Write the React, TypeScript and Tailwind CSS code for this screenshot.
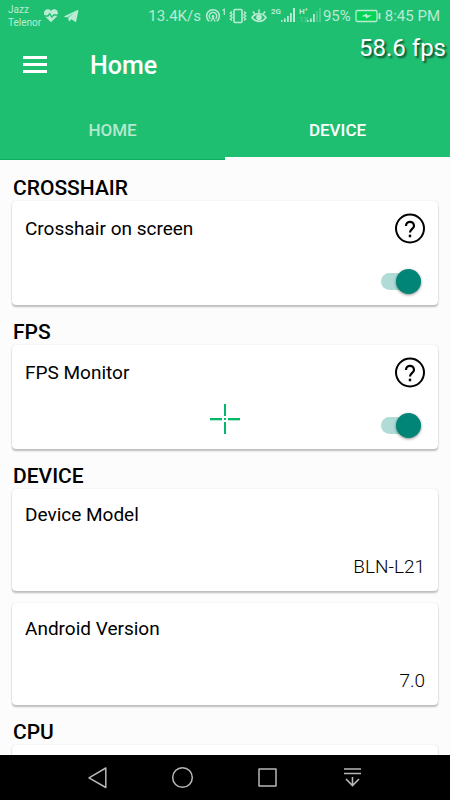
import type { ReactNode } from "react";

function StatusBar() {
  return (
    <div className="flex h-8 items-center pl-2 pr-2.5 text-[#b9ecd2]">
      <div className="text-[10px] leading-[13px]">
        <p>Jazz</p>
        <p>Telenor</p>
      </div>
      <svg className="ml-0.5 h-4 w-4" viewBox="0 0 16 16" aria-hidden="true">
        <path
          fill="currentColor"
          d="M8 14.3 2.4 8.8C.2 6.4.6 2.600 3.4 1.500 5.2.8 7 1.500 8 3c1-1.500 2.800-2.200 4.600-1.500 2.800 1.100 3.200 4.900 1 7.300z"
        />
        <path d="M1 8h4l1.800-2.400 2 3.600L10.600 7H15" fill="none" stroke="#1fbf72" strokeWidth="1.3" />
      </svg>
      <svg className="ml-1 h-4 w-4" viewBox="0 0 16 16" aria-hidden="true">
        <path fill="currentColor" d="M.8 8.400 14.600 2c.5-.2.9.1.8.7l-2.200 10.600c-.1.7-.6.9-1.200.5L8.500 11.200 6.700 13c-.5.5-.9.3-1-.3l-.5-3.100 6-4.600L4 9.400z" />
      </svg>

      <div className="ml-auto flex items-center text-[15px]">
        <span>13.4K/s</span>
        <svg className="ml-1 h-4 w-[22px]" viewBox="0 0 22 16" fill="none" stroke="currentColor" aria-hidden="true">
          <path d="M4.200 13.200a6.400 6.400 0 1 1 7.600 0M5.300 10.700a3.700 3.700 0 1 1 5.400 0" strokeWidth="1.500" />
          <circle cx="8" cy="8.300" r="1.300" fill="currentColor" stroke="none" />
          <path d="m5.800 13.500 2.200-4 2.200 4" strokeWidth="1.300" />
          <path d="m17.500 2.500 1.800-1.200v5.700" strokeWidth="1.200" />
        </svg>
        <svg className="ml-0.5 h-4 w-[18px]" viewBox="0 0 18 16" fill="none" stroke="currentColor" aria-hidden="true">
          <rect x="5" y="1.500" width="8" height="13" rx="1" strokeWidth="1.600" />
          <path d="M3 3.500 1.300 5 3 6.500 1.300 8 3 9.500 1.300 11 3 12.500M15 3.500 16.700 5 15 6.500 16.700 8 15 9.500 16.700 11 15 12.500" strokeWidth="1.400" />
        </svg>
        <svg className="ml-1 h-4 w-4" viewBox="0 0 16 16" fill="none" stroke="currentColor" aria-hidden="true">
          <path d="M1 9.500c3.500-5 10.500-5 14 0-3.500 5.200-10.500 5.200-14 0z" strokeWidth="1.700" />
          <circle cx="8" cy="9.400" r="2.800" fill="currentColor" stroke="none" />
          <path d="M8 5.500V1.500M3.800 5.800 1.800 3.400M12.200 5.800l2-2.400" strokeWidth="1.500" />
        </svg>
        <span className="ml-1 w-2.5 pb-2 text-[8px] leading-2 font-bold">2G</span>
        <svg className="h-4 w-3.5" viewBox="0 0 14 16" fill="currentColor" aria-hidden="true">
          <path d="M0 12h1.500v2H0zM3 10.500h1.700V14H3zM6 8h1.800v6H6zM9 5h1.800v9H9zM12 0h2v14h-2z" />
        </svg>
        <span className="ml-1 flex w-2 flex-col text-[8px] leading-2 font-bold">
          <span>H⁺</span>
          <span className="opacity-25">1X</span>
        </span>
        <svg className="h-4 w-3.5" viewBox="0 0 14 16" fill="currentColor" aria-hidden="true">
          <path d="M0 12h1.500v2H0zM3 10.500h1.700V14H3zM6 6h1.800v8H6z" />
          <path d="M9 3h1.800v11H9zM12 0h2v14h-2z" opacity=".3" />
        </svg>
        <span className="ml-0.5">95%</span>
        <svg className="ml-1 h-4 w-[26px]" viewBox="0 0 26 16" aria-hidden="true">
          <rect x="1" y="2.500" width="21" height="11" rx="1.500" fill="#00d457" stroke="currentColor" strokeWidth="1.300" />
          <path d="M24.500 5v6" stroke="currentColor" strokeWidth="1.800" />
          <path d="m6.500 8.200 5.500-2.700v1.700h5l-6 3.300V8.800z" fill="currentColor" />
        </svg>
        <span className="ml-1">8:45 PM</span>
      </div>
    </div>
  );
}

function Header() {
  return (
    <header className="bg-[#1fbf72]">
      <StatusBar />
      <div className="flex h-[68px] items-center px-[23px]">
        <button type="button" aria-label="Open menu" className="flex w-6 flex-col gap-1 pb-[3px]">
          <span className="h-[3px] w-full bg-white" />
          <span className="h-[3px] w-full bg-white" />
          <span className="h-[3px] w-full bg-white" />
        </button>
        <h1 className="ml-[43px] text-[25px] font-medium text-white">Home</h1>
      </div>
      <div role="tablist" className="grid h-[60px] grid-cols-2 text-[17px] font-medium">
        <button type="button" role="tab" aria-selected="false" className="border-b border-[#12ad60] pt-[3px] text-[#b4e9cf]">
          HOME
        </button>
        <button type="button" role="tab" aria-selected="true" className="border-b-3 border-[#fcfcfc] pt-[5px] text-white">
          DEVICE
        </button>
      </div>
    </header>
  );
}

function Section({ title, children }: { title: string; children?: ReactNode }) {
  return (
    <section className="mb-[15px]">
      <h2 className="mb-px pl-px text-[21px] leading-6 font-medium">{title}</h2>
      <div className="flex flex-col gap-3">{children}</div>
    </section>
  );
}

const cardClass =
  "rounded-sm bg-white px-[13px] shadow-[0_2px_2px_rgba(0,0,0,0.25),0_0_1px_rgba(0,0,0,0.2)]";

function ToggleCard({ id, label }: { id: string; label: string }) {
  return (
    <div className={`${cardClass} flex h-[104px] justify-between pt-3 pb-2`}>
      <label htmlFor={id} className="pt-1 text-[19px] leading-6">
        {label}
      </label>
      <div className="flex flex-col items-end justify-between">
        <button type="button" aria-label={`About ${label}`} className="h-8 w-8">
          <svg viewBox="0 0 32 32" fill="none" stroke="black" aria-hidden="true">
            <circle cx="17" cy="15.500" r="14" strokeWidth="2" />
            <path d="M13 13c0-5.600 8-5.600 8 0 0 2.800-4 3-4 6.500" strokeWidth="2.200" />
            <circle cx="17" cy="23" r="1.400" fill="black" stroke="none" />
          </svg>
        </button>
        <span className="relative mr-1 flex h-8 w-10 items-center">
          <input
            id={id}
            type="checkbox"
            role="switch"
            defaultChecked
            className="peer h-[17px] w-full appearance-none rounded-full bg-gray-300 checked:bg-[#b0dbd6]"
          />
          <span className="pointer-events-none absolute left-0 h-[25px] w-[25px] rounded-full bg-gray-100 shadow-[0_1px_3px_rgba(0,0,0,0.45)] peer-checked:right-0 peer-checked:left-auto peer-checked:bg-[#008577]" />
        </span>
      </div>
    </div>
  );
}

function InfoCard({ label, value }: { label: string; value: string }) {
  return (
    <div className={`${cardClass} flex h-[102px] flex-col justify-between pt-[14px] pb-3`}>
      <p className="text-[19px] leading-6">{label}</p>
      <p className="text-right text-[19px] leading-6 font-light">{value}</p>
    </div>
  );
}

function Crosshair() {
  return (
    <svg
      className="pointer-events-none absolute top-[404px] left-1/2 h-[30px] w-[30px] -translate-x-1/2"
      viewBox="0 0 30 30"
      fill="#00b868"
      aria-hidden="true"
    >
      <path d="M14 0h2v12h-2zM14 18h2v12h-2zM0 14h12v2H0zM18 14h12v2H18zM14 14h2v2h-2z" />
      <path d="M0 16h12v1H0zM18 16h12v1H18z" opacity=".3" />
    </svg>
  );
}

function NavBar() {
  return (
    <nav className="grid h-[45px] shrink-0 grid-cols-4 bg-black px-[55px] text-[#b8b8b8]">
      <button type="button" aria-label="Back" className="flex items-center justify-center">
        <svg className="h-6 w-6" viewBox="0 0 24 24" fill="none" stroke="currentColor" strokeWidth="1.500" strokeLinejoin="round">
          <path d="M19.800 2v19.500L3 11.800z" />
        </svg>
      </button>
      <button type="button" aria-label="Home" className="flex items-center justify-center">
        <svg className="h-6 w-6" viewBox="0 0 24 24" fill="none" stroke="currentColor" strokeWidth="1.500">
          <circle cx="11.500" cy="11.500" r="9.800" />
        </svg>
      </button>
      <button type="button" aria-label="Recent apps" className="flex items-center justify-center">
        <svg className="h-6 w-6" viewBox="0 0 24 24" fill="none" stroke="currentColor" strokeWidth="1.500" strokeLinejoin="round">
          <path d="M3 3h17v17H3z" />
        </svg>
      </button>
      <button type="button" aria-label="Notifications" className="flex items-center justify-center">
        <svg className="h-6 w-6" viewBox="0 0 24 24" fill="none" stroke="currentColor" strokeWidth="1.600">
          <path d="M3 3h17M3 7.500h17M11.500 11v8.500M5 13l6.500 6.500L18 13" />
        </svg>
      </button>
    </nav>
  );
}

export default function App() {
  return (
    <div className="relative flex h-screen flex-col overflow-hidden bg-[#fcfcfc] font-['Roboto',sans-serif] text-black">
      <Header />
      <main className="min-h-0 flex-1 overflow-hidden px-3 pt-4">
        <Section title="CROSSHAIR">
          <ToggleCard id="crosshair" label="Crosshair on screen" />
        </Section>
        <Section title="FPS">
          <ToggleCard id="fps" label="FPS Monitor" />
        </Section>
        <Section title="DEVICE">
          <InfoCard label="Device Model" value="BLN-L21" />
          <InfoCard label="Android Version" value="7.0" />
        </Section>
        <Section title="CPU">
          <div className={`${cardClass} h-[102px]`} />
        </Section>
      </main>
      <NavBar />
      <p className="pointer-events-none absolute top-8 right-1 text-2xl text-white [text-shadow:2px_2px_2px_rgba(0,0,0,0.6)]">
        58.6 fps
      </p>
      <Crosshair />
    </div>
  );
}
